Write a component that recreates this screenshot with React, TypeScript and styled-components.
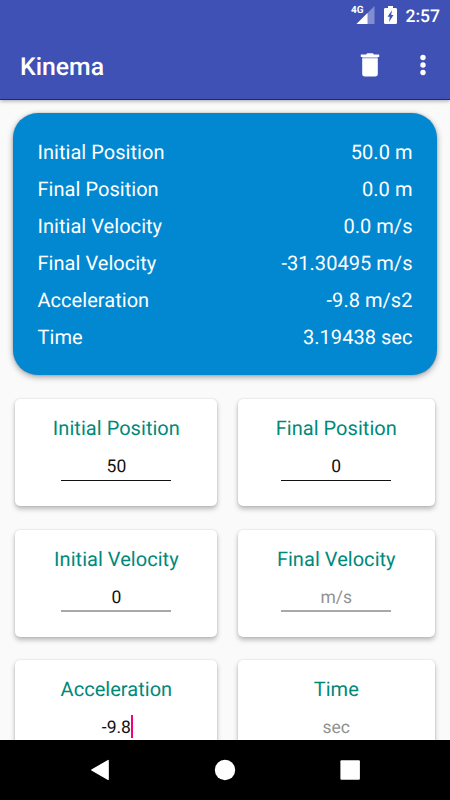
import React from "react";
import styled, { createGlobalStyle } from "styled-components";

const GlobalStyle = createGlobalStyle`
  * { box-sizing: border-box; }
  body {
    margin: 0;
    background: #fafafa;
    font-family: Roboto, "Liberation Sans", sans-serif;
    text-rendering: geometricPrecision;
    overflow: hidden;
  }
`;

const Screen = styled.div`
  width: 450px;
  height: 800px;
  display: flex;
  flex-direction: column;
  overflow: hidden;
  background: #fafafa;
`;

const Header = styled.header`
  flex: none;
  height: 100px;
  color: #fff;
  background: #3f51b5;
  border-bottom: 1px solid #0c2c9c;
  box-shadow: 0 1px 4px rgba(0, 0, 0, 0.35);
  z-index: 1;
`;

const StatusBar = styled.div`
  height: 30px;
  padding: 0 10px 0 0;
  display: flex;
  justify-content: flex-end;
  align-items: center;
`;

const Clock = styled.span`
  width: 34.5px;
  padding-top: 3px;
  font-size: 17.5px;
  font-weight: 500;
  line-height: 30px;
  white-space: nowrap;
`;

const Toolbar = styled.div`
  height: 69px;
  padding: 0 12.5px 0 20px;
  display: flex;
  align-items: center;
`;

const Title = styled.h1`
  flex: 1;
  margin: 6px 0 0;
  font-size: 24.8px;
  font-weight: 500;
  line-height: 30px;
`;

const IconButton = styled.button`
  width: 30px;
  height: 30px;
  margin-left: 22.7px;
  padding: 0;
  border: 0;
  background: none;
  color: inherit;
  display: grid;
  place-items: center;
`;

const Content = styled.main`
  flex: 1;
  min-height: 0;
  overflow: hidden;
  padding: 12.5px 13px 0 12.5px;
`;

const Summary = styled.section`
  height: 262.5px;
  padding: 21px 24.5px 0 25px;
  border-radius: 25px;
  color: #fff;
  background: #0288d1;
  box-shadow: 0 2px 6px rgba(0, 0, 0, 0.36), 0 0 2px rgba(0, 0, 0, 0.2);
`;

const SummaryRow = styled.div`
  height: 37.1px;
  display: flex;
  justify-content: space-between;
  align-items: center;
  font-size: 20px;
  line-height: 37px;
  letter-spacing: 0.04px;
`;

const Cards = styled.div`
  margin: 24px 2.5px 0 2.8px;
  display: grid;
  grid-template-columns: 202.2px 196.5px;
  justify-content: space-between;
  row-gap: 23.5px;
`;

const Card = styled.section`
  height: 107px;
  padding-top: 17px;
  border-radius: 5px;
  background: #fff;
  box-shadow: 0 3px 5px rgba(0, 0, 0, 0.26), 0 0 2px rgba(0, 0, 0, 0.14);
  display: flex;
  flex-direction: column;
  align-items: center;
`;

const Label = styled.label`
  color: #00897b;
  font-size: 20px;
  line-height: 24px;
  letter-spacing: 0.04px;
`;

const Field = styled.div<{ $filled: boolean; $hint: boolean }>`
  width: 110px;
  height: ${(p) => (p.$filled ? 40.8 : 41.5)}px;
  padding-top: 16px;
  border-bottom: ${(p) => (p.$filled ? "1px solid #111" : "2px solid #a9a9a9")};
  display: flex;
  justify-content: center;
  font-size: 17.5px;
  line-height: 23px;
  color: ${(p) => (p.$hint ? "#919191" : "#111")};
`;

const Caret = styled.span`
  width: 2px;
  height: 23px;
  margin: -2px -2px 0 0;
  background: #f50076;
`;

const NavBar = styled.nav`
  flex: none;
  height: 60px;
  padding: 0 87.5px 0 86.5px;
  background: #000;
  display: flex;
  justify-content: space-between;
  align-items: center;
  z-index: 1;
`;

const Glyph = styled.svg`
  display: block;
  flex: none;
  fill: #fff;
`;

const NetworkLabel = styled.span`
  align-self: flex-start;
  margin: 5px -8px 0 0;
  font-size: 10px;
  font-weight: 700;
  line-height: 12px;
  z-index: 1;
`;

const results = [
  ["Initial Position", "50.0 m"],
  ["Final Position", "0.0 m"],
  ["Initial Velocity", "0.0 m/s"],
  ["Final Velocity", "-31.30495 m/s"],
  ["Acceleration", "-9.8 m/s2"],
  ["Time", "3.19438 sec"],
];

const fields = [
  { label: "Initial Position", value: "50", filled: true },
  { label: "Final Position", value: "0", filled: true },
  { label: "Initial Velocity", value: "0" },
  { label: "Final Velocity", value: "m/s", hint: true },
  { label: "Acceleration", value: "-9.8", focused: true },
  { label: "Time", value: "sec", hint: true },
];

export default function App() {
  return (
    <Screen>
      <GlobalStyle />
      <Header>
        <StatusBar>
          <NetworkLabel>4G</NetworkLabel>
          <Glyph width="19" height="20" viewBox="0 0 19 20">
            <path d="M18.500 1v18H.5z" opacity=".35" />
            <path d="M11.500 8v11H.5z" />
          </Glyph>
          <Glyph width="31" height="20" viewBox="0 0 31 20">
            <path
              fillRule="evenodd"
              d="M13 1h5v2h2.500q1.500 0 1.500 1.300v13.400q0 1.300-1.500 1.300h-10q-1.500 0-1.500-1.300V4.300Q9 3 10.500 3H13zM17 5.200l-4.500 6.600h2.300L14 17l4.500-7h-2.300z"
            />
          </Glyph>
          <Clock>2:57</Clock>
        </StatusBar>
        <Toolbar>
          <Title>Kinema</Title>
          <IconButton aria-label="Clear">
            <Glyph width="20" height="24" viewBox="0 0 20 24">
              <path d="M.8 1.500H6L7.200.3h5.600L14 1.500h5.200V4H.8z" />
              <path d="M2.200 4h15.600v1.200H2.200z" opacity=".6" />
              <path d="M2.200 5.200h15.600v15.600q0 2.600-2.600 2.600H4.800q-2.600 0-2.600-2.600z" />
            </Glyph>
          </IconButton>
          <IconButton aria-label="More options">
            <Glyph width="6" height="22" viewBox="0 0 6 22">
              <circle cx="3" cy="3.500" r="2.700" />
              <circle cx="3" cy="11" r="2.700" />
              <circle cx="3" cy="18.500" r="2.700" />
            </Glyph>
          </IconButton>
        </Toolbar>
      </Header>
      <Content>
        <Summary>
          {results.map(([name, value]) => (
            <SummaryRow key={name}>
              <span>{name}</span>
              <span>{value}</span>
            </SummaryRow>
          ))}
        </Summary>
        <Cards>
          {fields.map((f) => (
            <Card key={f.label}>
              <Label>{f.label}</Label>
              <Field $filled={!!f.filled} $hint={!!f.hint}>
                {f.value}
                {f.focused && <Caret />}
              </Field>
            </Card>
          ))}
        </Cards>
      </Content>
      <NavBar>
        <Glyph width="25" height="22" viewBox="0 0 25 22">
          <path d="M21.200 1.500v19L4.700 11z" stroke="#fff" strokeWidth="1.200" strokeLinejoin="round" />
        </Glyph>
        <Glyph width="22" height="22" viewBox="0 0 22 22">
          <circle cx="11" cy="11" r="10.200" />
        </Glyph>
        <Glyph width="25" height="22" viewBox="0 0 25 22">
          <rect x="2.400" y="1.200" width="19.500" height="19.500" rx="1" />
        </Glyph>
      </NavBar>
    </Screen>
  );
}
